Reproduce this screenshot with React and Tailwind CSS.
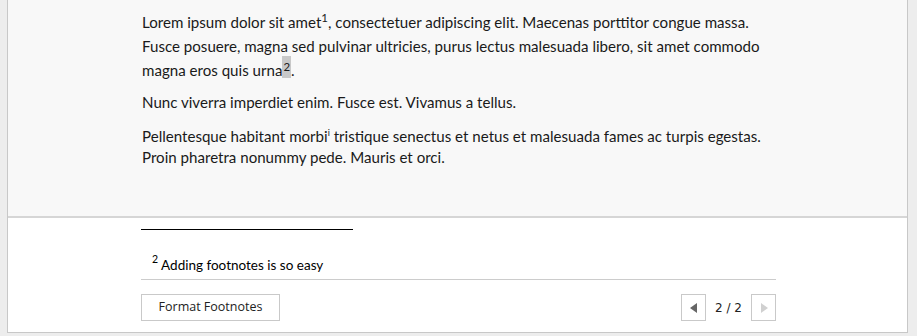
import React from "react";

export default function App() {
  const body = { fontFamily: "Lato, 'Liberation Sans', sans-serif" };
  return (
    <div className="w-[917px] h-[336px] bg-[#ededed] flex flex-col overflow-hidden">
      <div className="flex-1 flex flex-col ml-[7px] mr-[9px] mb-[3px] border-l border-r border-b border-[#c8c8c8] min-h-0">
        <div
          className="h-[218px] shrink-0 bg-[#f8f8f8] border-b-2 border-[#d6d6d6] pl-[134px] pt-[10px] text-[#1a1a1a] text-[15.1px]"
          style={body}
        >
          <p className="leading-[24px]">
            Lorem ipsum dolor sit amet<span className="text-[11.5px] align-[6px] leading-none">1</span>, consectetuer adipiscing elit. Maecenas porttitor congue massa.
            <br />
            Fusce posuere, magna sed pulvinar ultricies, purus lectus malesuada libero, sit amet commodo
            <br />
            magna eros quis urna<span className="inline-block text-[11.5px] leading-[11.5px] pt-[5px] pb-[5px] px-[1px] -my-[4px] align-[5px] bg-[#c8c8c8]">2</span>.
          </p>
          <p className="leading-[21px] mt-[10px]">Nunc viverra imperdiet enim. Fusce est. Vivamus a tellus.</p>
          <p className="leading-[21px] mt-[13px]">
            Pellentesque habitant morbi<span className="text-[9px] align-[6px] leading-none">i</span> tristique senectus et netus et malesuada fames ac turpis egestas.
            <br />
            Proin pharetra nonummy pede. Mauris et orci.
          </p>
        </div>
        <div className="flex-1 bg-white pl-[133px] pr-[131px] flex flex-col">
          <div className="w-[212px] h-px bg-black mt-[11px]" />
          <div className="mt-[24px] pl-[11px] text-[13.5px] text-black leading-[18px] h-[26px] border-b border-[#cccccc]" style={body}>
            <span className="text-[10.5px] align-[7px] leading-none">2</span> Adding footnotes is so easy
          </div>
          <div className="flex items-center justify-between mt-[14px]">
            <button
              className="w-[139px] h-[27px] border border-[#c9c9c9] bg-white text-[12.5px] text-[#222] flex items-center justify-center"
              style={{ fontFamily: "'Open Sans', sans-serif" }}
            >
              Format Footnotes
            </button>
            <div className="flex items-center">
              <button className="w-[25px] h-[27px] border border-[#c9c9c9] bg-white flex items-center justify-center">
                <svg width="8" height="10" viewBox="0 0 8 10"><polygon points="7,0 7,10 0,5" fill="#666" /></svg>
              </button>
              <span className="w-[45px] text-center text-[12px] text-[#222]" style={{ fontFamily: "Tahoma, 'DejaVu Sans', sans-serif" }}>2 / 2</span>
              <button className="w-[25px] h-[27px] border border-[#c9c9c9] bg-white flex items-center justify-center">
                <svg width="8" height="10" viewBox="0 0 8 10"><polygon points="1,0 1,10 8,5" fill="#d0d0d0" /></svg>
              </button>
            </div>
          </div>
        </div>
      </div>
    </div>
  );
}
